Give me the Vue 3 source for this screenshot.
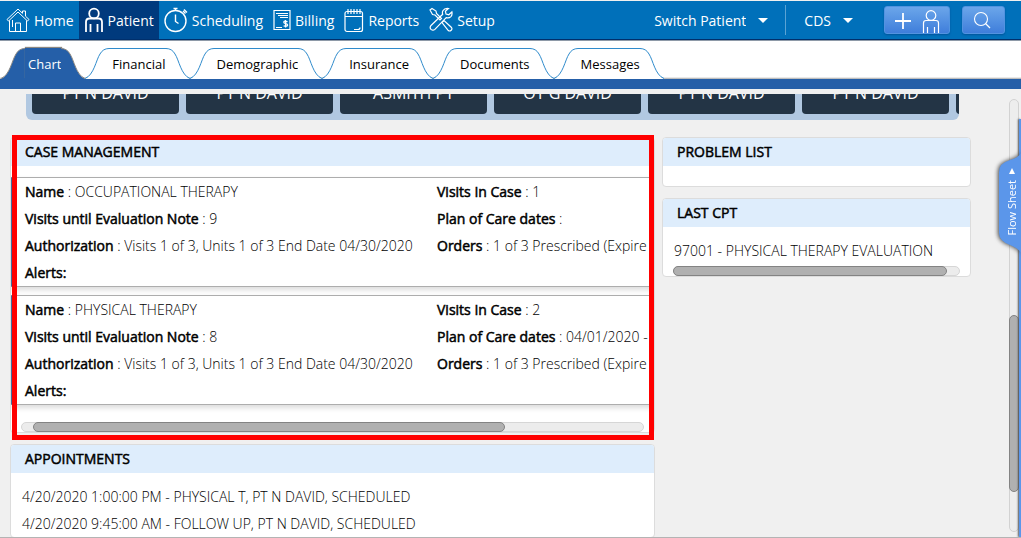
<script setup>
import { ref } from 'vue'

const modules = [
  { name: 'Home', icon: 'home', width: 24 },
  { name: 'Patient', icon: 'patient', width: 20 },
  { name: 'Scheduling', icon: 'clock', width: 24 },
  { name: 'Billing', icon: 'bill', width: 18 },
  { name: 'Reports', icon: 'report', width: 20 },
  { name: 'Setup', icon: 'tools', width: 24 },
]
const tabs = ['Chart', 'Financial', 'Demographic', 'Insurance', 'Documents', 'Messages']
const activeTab = ref('Chart')
const providers = ['PT N DAVID', 'PT N DAVID', 'ASMITH PT', 'OT G DAVID', 'PT N DAVID', 'PT N DAVID', '']
const cases = [
  { name: 'OCCUPATIONAL THERAPY', until: '9', visits: '1', dates: '' },
  { name: 'PHYSICAL THERAPY', until: '8', visits: '2', dates: '04/01/2020 -' },
]
const appointments = [
  '4/20/2020 1:00:00 PM - PHYSICAL T, PT N DAVID, SCHEDULED',
  '4/20/2020 9:45:00 AM - FOLLOW UP, PT N DAVID, SCHEDULED',
]
</script>

<template>
  <div class="page">
    <header class="topbar">
      <nav class="modules">
        <a v-for="m in modules" :key="m.name" href="#" class="module" :class="{ current: m.name === 'Patient' }">
          <svg :width="m.width" height="26" :viewBox="`0 0 ${m.width} 26`" class="icon">
            <template v-if="m.icon === 'home'">
              <path d="M1 12.500 12 2l4.500 4.300V4h3v5.200L23 12.500l-1.500 1.500L12 5 2.500 14z" stroke-width="1" />
              <path d="M3.500 13.500V24.500h17V13.500M9.500 24v-8h5v8M6.500 13v7" stroke-width="1" />
            </template>
            <template v-else-if="m.icon === 'patient'">
              <circle cx="10" cy="6.500" r="4.800" stroke-width="1.800" />
              <path d="M2 25V15q0-3.500 3.500-3.500h9Q18 11.500 18 15v10M6.500 25v-8M13.500 25v-8" stroke-width="1.800" />
            </template>
            <template v-else-if="m.icon === 'clock'">
              <circle cx="11.500" cy="14" r="10.500" stroke-width="1.400" />
              <path d="M11.500 7.500v7l3 2M9.500 1.500h4M11.500 1.500v2M19 4l2.500 2.500M20 2.500l3 3" stroke-width="1.400" />
            </template>
            <template v-else-if="m.icon === 'bill'">
              <path d="M1 3.500h16v19H1z" stroke-width="1.200" />
              <path d="M3 6.500h12M5 8.500h10M7 10.500h8M3 20.500h6" stroke-width="1.100" />
              <path d="M14.500 14.700q-3.700-1.500-3.700.6 0 1 1.900 1.300t1.900 1.400q0 1.900-4 .8M12.600 13v7.500" stroke-width="1.300" />
            </template>
            <template v-else-if="m.icon === 'report'">
              <rect x="1" y="4.500" width="17.500" height="20" rx="2" stroke-width="1.200" />
              <path d="M1 9.500h17.500M4 2v5M7 2v5M10 2v5M13 2v5M16 2v5M10 22.500h4q2 0 2-2" stroke-width="1.200" />
            </template>
            <template v-else>
              <path d="M1 3l2-1.500 4 2.500.5 2.500 5 5-1.500 1.500-5-5L3.500 7.500zM13 15.500l2-2 7.500 7q1 1.500-.3 2.800-1.500 1.300-2.900.2z" />
              <path d="M19.500 1.500q-4-.5-5.600 2.300-.9 1.700-.2 3.500L2 18.500q-1.700 1.900 0 3.900 2 1.600 3.900 0L17.200 10.700q2.800.8 4.700-1.100 1.600-1.900 1-4.600l-3.100 2.800-2.800-.8-.6-2.700z" />
            </template>
          </svg>
          <span>{{ m.name }}</span>
        </a>
      </nav>
      <div class="tools">
        <label class="picker">
          <select aria-label="Switch Patient"><option>Switch Patient</option></select>
          <svg width="10" height="5" viewBox="0 0 10 5"><path d="M0 0h10L5 5z" fill="#fff" /></svg>
        </label>
        <label class="picker site">
          <select aria-label="Site"><option>CDS</option></select>
          <svg width="10" height="5" viewBox="0 0 10 5"><path d="M0 0h10L5 5z" fill="#fff" /></svg>
        </label>
        <button type="button" class="tool add" aria-label="Add patient">
          <svg width="46" height="26" viewBox="0 0 46 26" class="icon">
            <path d="M1 14h16M9 6v16" stroke-width="1.800" />
            <circle cx="37" cy="8.500" r="4.800" stroke-width="1.200" />
            <path d="M29.500 26V16q0-2.500 2.500-2.500h10q2.500 0 2.500 2.500v10M33.500 26v-6M40.500 26v-6" stroke-width="1.200" />
          </svg>
        </button>
        <button type="button" class="tool search" aria-label="Search">
          <svg width="22" height="18" viewBox="0 0 22 18" class="icon">
            <circle cx="8" cy="8" r="6.500" stroke-width="1.100" />
            <path d="M12.500 12.500l4.500 4.500" />
          </svg>
        </button>
      </div>
    </header>

    <nav class="tabs">
      <a v-for="t in tabs" :key="t" href="#" class="tab" :class="{ active: t === activeTab }" @click.prevent="activeTab = t">
        <svg class="edge" width="24" height="31" viewBox="0 0 24 31">
          <path class="fill" d="M0 31C9 27 11 12 15 6Q18 .5 24 .5V31z" />
          <path class="line" d="M0 30.500C9 27 11 12 15 6Q18 .5 24 .5" />
        </svg>
        <span class="tab-name">{{ t }}</span>
        <svg class="edge" width="24" height="31" viewBox="0 0 24 31">
          <path class="fill" d="M24 31C15 27 13 12 9 6Q6 .5 0 .5V31z" />
          <path class="line" d="M24 30.500C15 27 13 12 9 6Q6 .5 0 .5" />
        </svg>
      </a>
    </nav>

    <main class="content">
      <div class="providers">
        <div v-for="(p, i) in providers" :key="i" class="provider"><span>{{ p }}</span></div>
      </div>

      <div class="columns">
        <div class="column">
          <section class="card cases">
            <h2>CASE MANAGEMENT</h2>
            <div class="case-list">
              <div v-for="c in cases" :key="c.name" class="case">
                <div><b>Name</b> : {{ c.name }}</div>
                <div><b>Visits In Case</b> : {{ c.visits }}</div>
                <div><b>Visits until Evaluation Note</b> : {{ c.until }}</div>
                <div><b>Plan of Care dates</b> : {{ c.dates }}</div>
                <div><b>Authorization</b> : Visits 1 of 3, Units 1 of 3 End Date 04/30/2020</div>
                <div><b>Orders</b> : 1 of 3 Prescribed (Expire</div>
                <div><b>Alerts:</b></div>
              </div>
            </div>
            <div class="hbar case-bar"><div class="thumb"></div></div>
            <div class="highlight"></div>
          </section>

          <section class="card appointments">
            <h2>APPOINTMENTS</h2>
            <div class="lines">
              <div v-for="a in appointments" :key="a">{{ a }}</div>
            </div>
          </section>
        </div>

        <div class="column side">
          <section class="card problems">
            <h2>PROBLEM LIST</h2>
            <div class="empty"></div>
          </section>
          <section class="card">
            <h2>LAST CPT</h2>
            <div class="lines">
              <div>97001 - PHYSICAL THERAPY EVALUATION</div>
            </div>
            <div class="hbar cpt-bar"><div class="thumb"></div></div>
          </section>
        </div>
      </div>

      <div class="vbar"><div class="thumb"></div></div>
      <div class="rail"></div>
      <button type="button" class="flow">
        <svg class="flow-shape" width="22" height="100" viewBox="0 0 22 100">
          <path d="M22 0Q19 5 11 7 0 10 0 19v61q0 8 11 12 8 3 11 8z" fill="#5b96ea" />
        </svg>
        <svg class="flow-mark" width="6" height="6" viewBox="0 0 6 6"><path d="M3 0l3 6H0z" fill="#fff" /></svg>
        <span class="flow-name">Flow Sheet</span>
      </button>
    </main>
  </div>
</template>

<style>
body {
  background: #f0f0f0;
}
</style>

<style scoped>
* {
  box-sizing: border-box;
}
.page {
  display: flex;
  flex-direction: column;
  height: 100vh;
  overflow: hidden;
  border-top: 1px solid #f0f0f0;
  border-bottom: 1px solid #b4b4b4;
  background: #f0f0f0;
  color: #000;
  font-family: "Open Sans", "Noto Sans", sans-serif;
  font-size: 14px;
}
.topbar {
  display: flex;
  justify-content: space-between;
  flex: none;
  background: #0070ba;
  border-bottom: 1px solid #002f6c;
  color: #fff;
}
.modules,
.tools {
  display: flex;
  align-items: center;
}
.modules {
  padding-left: 1px;
}
.module {
  display: flex;
  align-items: center;
  gap: 4px;
  height: 38px;
  padding: 0 5px;
  color: #fff;
  text-decoration: none;
}
.module.current {
  background: #003a7d;
}
.icon {
  fill: none;
  stroke: #fff;
  stroke-width: 1.2;
}
.tools {
  padding-right: 16px;
}
.picker {
  display: flex;
  align-items: center;
  gap: 12px;
  height: 30px;
  padding-right: 17px;
}
.picker select {
  appearance: none;
  field-sizing: content;
  padding: 0;
  border: 0;
  background: transparent;
  color: #fff;
  font: inherit;
}
.site {
  margin-right: 14px;
  padding-left: 18px;
  border-left: 1px solid #5ba3d4;
}
.tool {
  display: flex;
  align-items: center;
  justify-content: center;
  height: 28px;
  padding: 0;
  border: 1px solid #5293e0;
  border-radius: 3px;
  background: linear-gradient(#6ba6ea, #3f7edb);
  box-shadow: 0 1px 2px #00559b;
}
.add {
  width: 66px;
  margin-right: 12px;
}
.search {
  width: 43px;
}
.tabs {
  display: flex;
  align-items: flex-end;
  flex: none;
  height: 49px;
  border-top: 1px solid #8e9aa8;
  border-bottom: 10px solid #255fa8;
  background: linear-gradient(#fff 36px, #a8a8a8 38px);
}
.tab {
  display: flex;
  color: #000;
  font-size: 13px;
  line-height: 30px;
  text-decoration: none;
}
.edge .fill {
  fill: #fff;
}
.edge .line {
  fill: none;
  stroke: #2f8bcc;
}
.tab-name {
  padding: 0 1px 0 3px;
  margin-right: -1px;
  border-top: 1px solid #2f8bcc;
  background: #fff;
}
.active {
  padding-left: 1px;
  color: #fff;
}
.active .tab-name {
  border-top-color: #255fa8;
  background: #255fa8;
  box-shadow: 0 -1px 1px #8b8780;
}
.active .fill {
  fill: #255fa8;
}
.active .line {
  stroke: #8b8780;
}
.content {
  position: relative;
  flex: 1;
  min-height: 0;
  padding: 5px 50px 0 10px;
}
.providers {
  display: flex;
  gap: 7px;
  height: 26px;
  margin: 0 12px 17px 16px;
  padding: 0 0 6px 6px;
  overflow: hidden;
  border-radius: 0 0 6px 6px;
  background: #b1c8e1;
}
.provider {
  display: flex;
  align-items: flex-end;
  justify-content: center;
  flex: none;
  width: 147px;
  padding-bottom: 10px;
  overflow: hidden;
  border-radius: 0 0 4px 4px;
  background: #233445;
  color: #fff;
  font-size: 16px;
  line-height: 22px;
}
.columns {
  display: grid;
  grid-template-columns: minmax(0, 645fr) minmax(0, 309fr);
  gap: 7px;
}
.card {
  position: relative;
  border: 1px solid #dcdcdc;
  border-radius: 4px;
  background: #fff;
}
h2 {
  margin: 0;
  padding-left: 14px;
  border-radius: 3px 3px 0 0;
  background: #deedfc;
  font-size: 14px;
  font-weight: 400;
  line-height: 28px;
  -webkit-text-stroke: 0.5px #000;
}
b {
  font-weight: 400;
  -webkit-text-stroke: 0.5px #000;
}
.case-list {
  display: grid;
  gap: 8px;
  padding: 11px 0 17px;
  overflow: hidden;
}
.case {
  display: grid;
  grid-template-columns: 412px 1fr;
  padding-left: 14px;
  border-top: 1px solid #adadad;
  border-bottom: 1px solid #adadad;
  border-left: 1px solid #3f6f9f;
  box-shadow: 0 3px 5px #ddd;
  padding-left: 13px;
  line-height: 27px;
  white-space: nowrap;
}
.case > div {
  min-width: 0;
}
.case,
.lines {
  font-weight: 350;
}
.hbar {
  height: 10px;
  border: 1px solid #d6d6d6;
  border-radius: 5px;
  background: #ececec;
}
.thumb {
  border: 1px solid #838383;
  border-radius: 5px;
  background: #b0b0b0;
}
.hbar .thumb {
  height: 10px;
  margin-top: -1px;
}
.case-bar {
  margin: 0 10px;
}
.case-bar .thumb {
  width: 76%;
  margin-left: 11px;
}
.cpt-bar {
  margin: 2px 10px 0;
}
.cpt-bar .thumb {
  width: 96%;
  margin-left: -1px;
}
.highlight {
  position: absolute;
  inset: -3px 0 -8px 1px;
  border: 5px solid #f00;
}
.appointments {
  margin-top: 11px;
}
.lines {
  padding: 10px 11px 0;
  line-height: 27px;
  white-space: nowrap;
  overflow: hidden;
}
.empty {
  height: 20px;
}
.problems {
  margin-bottom: 11px;
}
.side {
  min-width: 0;
}
.vbar {
  position: absolute;
  top: 10px;
  right: 2px;
  bottom: 5px;
  width: 10px;
  border: 1px solid #d2d2d2;
  border-radius: 5px;
  background: #ededed;
}
.vbar .thumb {
  width: 10px;
  height: 41%;
  margin: 215px 0 0 -1px;
}
.rail {
  position: absolute;
  top: 30px;
  right: 0;
  bottom: 0;
  width: 2px;
  background: #5b96ea;
  box-shadow: -1px 0 2px #555;
}
.flow {
  position: absolute;
  top: 64px;
  right: 0;
  display: flex;
  flex-direction: column;
  align-items: center;
  gap: 6px;
  width: 22px;
  height: 100px;
  padding: 15px 0 0 3px;
  border: 0;
  background: none;
  color: #fff;
  font-family: inherit;
  font-size: 11px;
  line-height: 16px;
}
.flow-shape {
  position: absolute;
  inset: 0;
  filter: drop-shadow(-1px 0 2px #444);
}
.flow-mark,
.flow-name {
  position: relative;
}
.flow-name {
  writing-mode: vertical-rl;
  transform: rotate(180deg);
}
</style>
